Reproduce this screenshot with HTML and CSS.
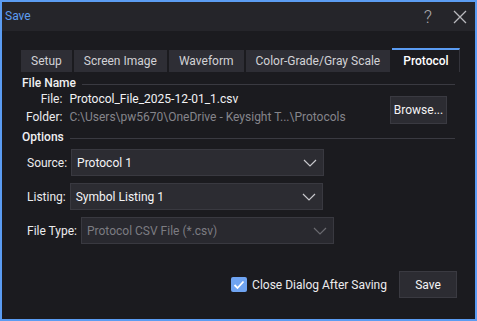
FILE: index.html
```html
<!DOCTYPE html>
<html lang="en">
<head>
    <meta charset="UTF-8">
    <title>Save</title>
    <link rel="stylesheet" href="styles.css">
</head>
<body>
    <div class="dialog">
        <div class="titlebar">
            <span class="title">Save</span>
            <div class="controls">
                <span class="help">?</span>
                <svg class="close" width="14" height="14" viewBox="0 0 14 14">
                    <path d="M1 1 L13 13 M13 1 L1 13" stroke="#b9b9bd" stroke-width="1.3" fill="none"/>
                </svg>
            </div>
        </div>
        <div class="content">
            <div class="tabs">
                <div class="tab">Setup</div>
                <div class="tab">Screen Image</div>
                <div class="tab">Waveform</div>
                <div class="tab">Color-Grade/Gray Scale</div>
                <div class="tab active">Protocol</div>
            </div>

            <div class="group-head"><span>File Name</span><div class="rule"></div></div>
            <div class="file-block">
                <div class="file-grid">
                    <span class="label">File:</span>
                    <span class="value">Protocol_File_2025-12-01_1.csv</span>
                    <span class="label">Folder:</span>
                    <span class="value dim">C:\Users\pw5670\OneDrive - Keysight T...\Protocols</span>
                </div>
                <button class="btn browse">Browse...</button>
            </div>

            <div class="group-head"><span>Options</span><div class="rule"></div></div>
            <div class="form-row">
                <span class="label">Source:</span>
                <div class="select">
                    <span>Protocol 1</span>
                    <svg width="14" height="8" viewBox="0 0 14 8"><path d="M1 1 L7 7 L13 1" stroke="#c8c8cc" stroke-width="1.2" fill="none"/></svg>
                </div>
            </div>
            <div class="form-row">
                <span class="label">Listing:</span>
                <div class="select">
                    <span>Symbol Listing 1</span>
                    <svg width="14" height="8" viewBox="0 0 14 8"><path d="M1 1 L7 7 L13 1" stroke="#c8c8cc" stroke-width="1.2" fill="none"/></svg>
                </div>
            </div>
            <div class="form-row">
                <span class="label">File Type:</span>
                <div class="select disabled">
                    <span>Protocol CSV File (*.csv)</span>
                    <svg width="14" height="8" viewBox="0 0 14 8"><path d="M1 1 L7 7 L13 1" stroke="#6a6a70" stroke-width="1.2" fill="none"/></svg>
                </div>
            </div>

            <div class="footer">
                <label class="check">
                    <span class="box">
                        <svg width="12" height="10" viewBox="0 0 12 10"><path d="M1.5 5 L4.5 8 L10.5 1.5" stroke="#fff" stroke-width="1.8" fill="none"/></svg>
                    </span>
                    Close Dialog After Saving
                </label>
                <button class="btn save">Save</button>
            </div>
        </div>
    </div>
</body>
</html>
```

FILE: styles.css
```css
body {
    margin: 0;
    padding: 0;
    background-color: #1b1b1f;
    font-family: Roboto, "Liberation Sans", sans-serif;
    font-size: 12px;
    color: #e6e6e8;
}
.dialog {
    width: 477px;
    height: 321px;
    box-sizing: border-box;
    border: 2px solid #5b9cf2;
    background-color: #1b1b1f;
    display: flex;
    flex-direction: column;
}
.titlebar {
    height: 29px;
    background-color: #25252a;
    display: flex;
    align-items: center;
    justify-content: space-between;
    padding: 0 8px 0 3px;
}
.title {
    color: #5d9df2;
    margin-top: -1px;
}
.controls {
    display: flex;
    align-items: center;
    gap: 21px;
}
.help {
    color: #a9a9ae;
    font-size: 18px;
    font-weight: 300;
}
.content {
    padding: 17px 18px 0 20px;
    display: flex;
    flex-direction: column;
}
/* Вкладки */
.tabs {
    display: flex;
    align-items: flex-end;
    gap: 2px;
    margin-left: -1px;
}
.tab {
    flex-shrink: 0;
    white-space: nowrap;
    height: 22px;
    line-height: 22px;
    padding: 0 10px;
    background-color: #2e2e35;
    color: #d2d2d6;
}
.tab.active {
    height: 22px;
    line-height: 22px;
    background-color: #1b1b1f;
    border-top: 2px solid #5b9cf2;
    border-right: 1px solid #34343b;
    color: #ffffff;
    font-weight: 500;
    padding: 0 10px 0 11px;
}
/* Заголовки групп */
.group-head {
    display: flex;
    align-items: center;
    gap: 6px;
    line-height: 14px;
    margin-top: 4px;
    color: #f0f0f2;
    font-weight: 500;
    padding-right: 2px;
}
.rule {
    flex: 1;
    height: 1px;
    background-color: #3a3a41;
    margin-top: 2px;
}
.file-block {
    display: flex;
    align-items: center;
    justify-content: space-between;
    padding-right: 10px;
}
.file-grid {
    display: grid;
    grid-template-columns: auto auto;
    column-gap: 7px;
    line-height: 18px;
    padding-left: 4px;
}
.file-grid .label {
    text-align: right;
}
.value {
    color: #f2f2f4;
}
.value.dim {
    color: #85858b;
}
.label {
    color: #ececee;
}
.btn {
    font-family: Roboto, "Liberation Sans", sans-serif;
    font-size: 12px;
    color: #f4f4f6;
    background-color: #2c2c32;
    border: 1px solid #3a3a41;
    padding: 0;
}
.browse {
    width: 57px;
    height: 28px;
    margin-top: 4px;
}
/* Строки выбора */
.form-row {
    display: flex;
    align-items: center;
    gap: 4px;
    padding-left: 5px;
    margin-top: 7px;
}
.group-head + .form-row {
    margin-top: 5px;
}
.select {
    width: 253px;
    height: 27px;
    box-sizing: border-box;
    background-color: #2c2c32;
    border: 1px solid #393940;
    display: flex;
    align-items: center;
    justify-content: space-between;
    padding: 0 6px 0 5px;
    color: #f4f4f6;
}
.select.disabled {
    color: #7c7c82;
    background-color: #29292f;
}
.footer {
    display: flex;
    justify-content: flex-end;
    align-items: center;
    margin-top: 27px;
}
.check {
    display: flex;
    align-items: center;
    gap: 5px;
    color: #ececee;
    margin-right: 12px;
}
.box {
    width: 16px;
    height: 15px;
    border-radius: 2px;
    background-color: #6fa4f2;
    display: flex;
    align-items: center;
    justify-content: center;
}
.save {
    width: 58px;
    height: 27px;
}
```
